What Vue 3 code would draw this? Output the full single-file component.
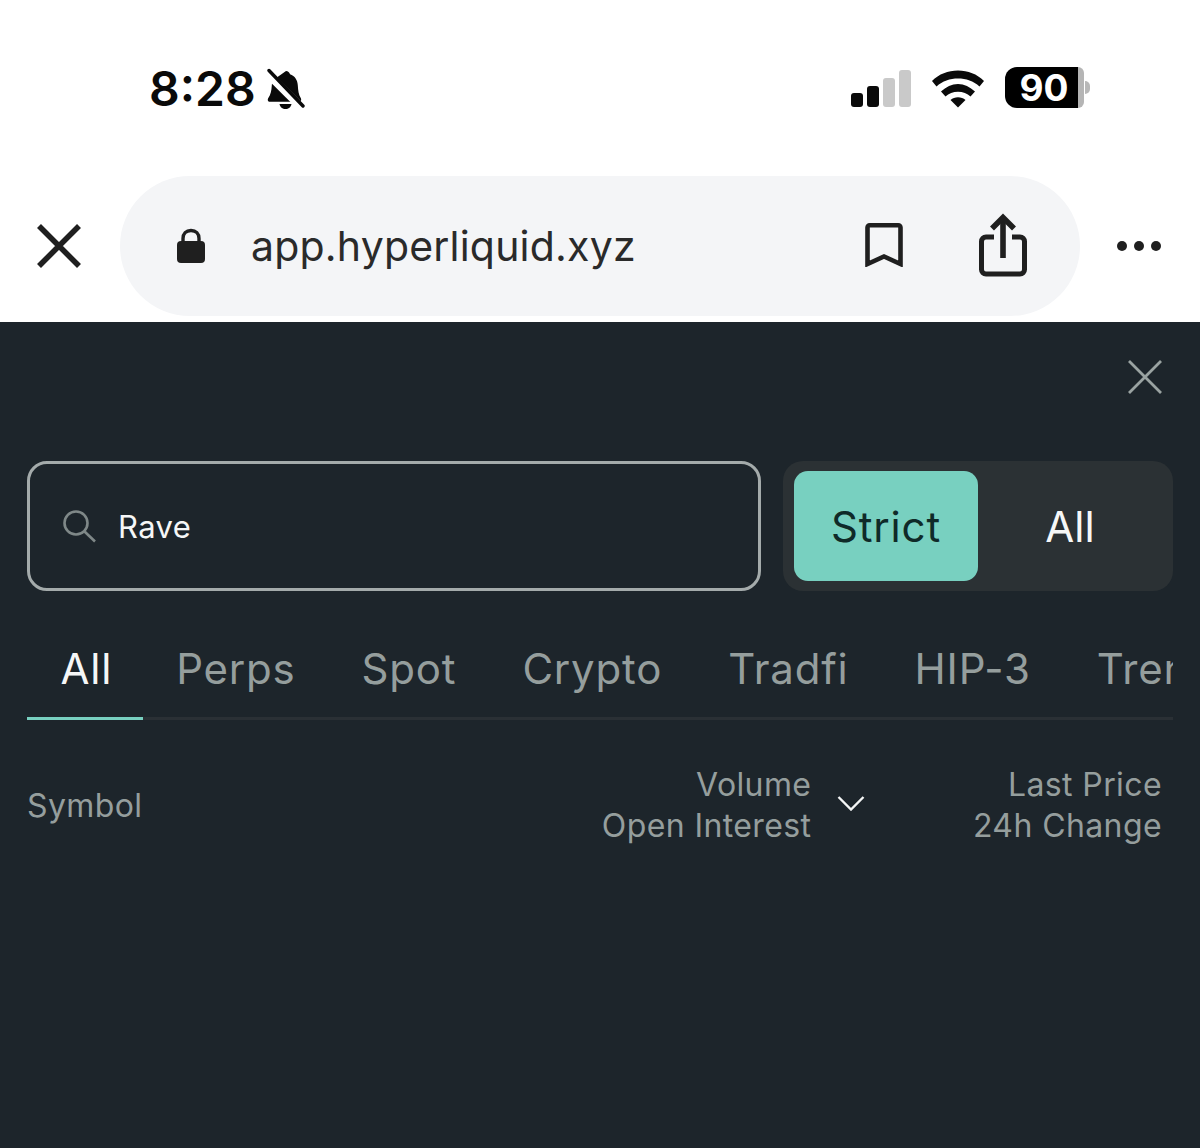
<template>
  <div class="page">
    <div class="browser">
      <div class="status-bar">
        <div class="status-left">
          <span class="time">8:28</span>
          <svg class="bell" width="40" height="42" viewBox="0 0 40 42">
            <path d="M19 3c2 0 3.500 1.300 4 3.200 5 1.600 7.500 5.800 7.800 11 .3 5 .8 9.500 2.800 12.500.9 1.500 1 4-1.400 4H3c-2.400 0-2.600-2.500-1.700-3.800 2.300-2.800 3.200-7.300 3.500-12.300.1-2 .6-4 1.500-5.500z" fill="#0a0a0a"/>
            <path d="M12.500 36h12c-.5 3-3 5-6 5s-5.500-2-6-5z" fill="#0a0a0a"/>
            <path d="M0 5l34 34" stroke="#fff" stroke-width="8"/>
            <path d="M2 2.500l34 35.500" stroke="#0a0a0a" stroke-width="3.400" stroke-linecap="round"/>
          </svg>
        </div>
        <div class="status-right">
          <div class="signal">
            <span class="bar b1"></span>
            <span class="bar b2"></span>
            <span class="bar b3"></span>
            <span class="bar b4"></span>
          </div>
          <svg class="wifi" width="54" height="40" viewBox="0 0 54 40">
            <path d="M1 13C8 6 17 2.500 27 2.500S46 6 53 13l-4.500 5.500C42.500 13 35 10.500 27 10.500S11.500 13 5.500 18.500z" fill="#0a0a0a"/>
            <path d="M10 23.500C15 19 20.800 16 27 16s12 3 17 7.500L39.500 28.500c-3.200-3-7.700-4.700-12.500-4.700s-9.300 1.700-12.500 4.700z" fill="#0a0a0a"/>
            <path d="M19.500 32c2-1.800 4.700-2.800 7.500-2.800s5.500 1 7.500 2.800L27 39.500z" fill="#0a0a0a"/>
          </svg>
          <div class="battery">
            <div class="battery-body">
              <span class="battery-text">90</span>
              <span class="battery-rest"></span>
            </div>
            <span class="battery-cap"></span>
          </div>
        </div>
      </div>
      <div class="url-row">
        <svg class="url-close" width="44" height="44" viewBox="0 0 44 44">
          <path d="M2 2l40 40M42 2L2 42" stroke="#1f1f1f" stroke-width="5.600"/>
        </svg>
        <div class="url-pill">
          <svg class="lock" width="28" height="36" viewBox="0 0 28 36">
            <path d="M6 15V10.500C6 5.500 9 2.500 14 2.500s8 3 8 8V15" fill="none" stroke="#1f1f1f" stroke-width="3.400"/>
            <rect x="0" y="13" width="28" height="22" rx="4" fill="#1f1f1f"/>
          </svg>
          <span class="url-text">app.hyperliquid.xyz</span>
          <svg class="bookmark" width="38" height="44" viewBox="0 0 38 44">
            <path d="M2.500 41V4.500c0-1.200 1-2.200 2.200-2.200h28.600c1.200 0 2.200 1 2.200 2.200V41L19 33.500z" fill="none" stroke="#1f1f1f" stroke-width="4.600"/>
          </svg>
          <svg class="share" width="48" height="64" viewBox="0 0 48 64">
            <path d="M15 24H7c-2.500 0-4.500 2-4.500 4.500v28c0 2.500 2 4.500 4.500 4.500h34c2.500 0 4.500-2 4.500-4.500v-28c0-2.500-2-4.500-4.500-4.500h-8" fill="none" stroke="#1f1f1f" stroke-width="5"/>
            <path d="M24 45V5" stroke="#1f1f1f" stroke-width="5.600"/>
            <path d="M13 15.500L24 4.500 35 15.500" fill="none" stroke="#1f1f1f" stroke-width="5.600"/>
          </svg>
        </div>
        <div class="more">
          <span class="dot"></span>
          <span class="dot"></span>
          <span class="dot"></span>
        </div>
      </div>
    </div>

    <div class="modal">
      <div class="modal-top">
        <svg width="34" height="34" viewBox="0 0 34 34">
          <path d="M1 1l32 32M33 1L1 33" stroke="#9aa3a2" stroke-width="2.800"/>
        </svg>
      </div>
      <div class="filter-row">
        <div class="search-box">
          <svg width="34" height="34" viewBox="0 0 34 34">
            <circle cx="14" cy="14" r="11.500" fill="none" stroke="#7f8888" stroke-width="2.600"/>
            <path d="M22.500 22.500L33 32.500" stroke="#7f8888" stroke-width="2.600"/>
          </svg>
          <span class="search-text">Rave</span>
        </div>
        <div class="mode-toggle">
          <div class="mode active">Strict</div>
          <div class="mode">All</div>
        </div>
      </div>
      <div class="tabs">
        <div v-for="(tab, i) in tabs" :key="tab" class="tab" :class="{ selected: i === 0 }">{{ tab }}</div>
      </div>
      <div class="table-head">
        <div class="col-symbol">Symbol</div>
        <div class="col-volume">
          <div>Volume</div>
          <div>Open Interest</div>
        </div>
        <svg class="chevron" width="28" height="16" viewBox="0 0 28 16">
          <path d="M1.500 2L14 14.500 26.500 2" fill="none" stroke="#f4f6f6" stroke-width="2.400"/>
        </svg>
        <div class="col-price">
          <div>Last Price</div>
          <div>24h Change</div>
        </div>
      </div>
    </div>
  </div>
</template>

<script setup>
const tabs = ['All', 'Perps', 'Spot', 'Crypto', 'Tradfi', 'HIP-3', 'Trending'];
</script>

<style scoped>
.page {
  width: 1200px;
  height: 1148px;
  display: flex;
  flex-direction: column;
  overflow: hidden;
  font-family: Inter, "Liberation Sans", sans-serif;
  background: #fff;
}

.browser {
  height: 322px;
  flex-shrink: 0;
  display: flex;
  flex-direction: column;
  background: #fff;
}

.status-bar {
  height: 176px;
  flex-shrink: 0;
  display: flex;
  justify-content: space-between;
  align-items: flex-start;
  padding: 60px 110px 0 149px;
  box-sizing: border-box;
}

.status-left {
  display: flex;
  align-items: center;
  gap: 11px;
  height: 58px;
}

.time {
  font-size: 48px;
  font-weight: 600;
  color: #0a0a0a;
  line-height: 58px;
}

.status-right {
  display: flex;
  align-items: center;
  height: 58px;
}

.signal {
  display: flex;
  align-items: flex-end;
  gap: 4px;
  height: 37px;
  margin-right: 20px;
  margin-top: -1px;
}

.bar {
  width: 12px;
  border-radius: 3px;
  background: #0a0a0a;
}

.b1 { height: 14px; }
.b2 { height: 21px; }
.b3 { height: 29px; background: #c9c9c9; }
.b4 { height: 37px; background: #c9c9c9; }

.wifi {
  margin-right: 20px;
  margin-top: -3px;
}

.battery {
  display: flex;
  align-items: center;
  gap: 1px;
  margin-top: -3px;
}

.battery-body {
  width: 79px;
  height: 41px;
  display: flex;
}

.battery-text {
  flex: 1;
  padding-left: 5px;
  text-align: center;
  color: #fff;
  background: #000;
  border-radius: 12px 0 0 12px;
  font-size: 37px;
  font-weight: 700;
  line-height: 41px;
}

.battery-rest {
  width: 6px;
  background: #b5b5b5;
  border-radius: 0 12px 12px 0;
}

.battery-cap {
  width: 5px;
  height: 13px;
  border-radius: 0 5px 5px 0;
  background: #b8b8b8;
}

.url-row {
  display: flex;
  align-items: flex-start;
  padding: 0 37px;
}

.url-close {
  margin-top: 48px;
  margin-right: 39px;
  flex-shrink: 0;
}

.url-pill {
  width: 960px;
  height: 140px;
  flex-shrink: 0;
  border-radius: 70px;
  background: #f4f5f7;
  display: flex;
  align-items: center;
  padding-left: 57px;
  box-sizing: border-box;
}

.lock {
  margin-top: -1px;
}

.url-text {
  margin-left: 46px;
  width: 614px;
  font-size: 41px;
  letter-spacing: 0.2px;
  color: #2a2a2a;
  white-space: nowrap;
}

.bookmark {
  margin-top: -3px;
}

.share {
  margin-left: 76px;
  margin-top: -3px;
}

.more {
  display: flex;
  gap: 7px;
  margin-left: 37px;
  margin-top: 65px;
}

.dot {
  width: 10px;
  height: 10px;
  border-radius: 50%;
  background: #1f1f1f;
}

.modal {
  flex: 1;
  background: #1d252b;
  padding: 38px 27px 0;
  display: flex;
  flex-direction: column;
}

.modal-top {
  display: flex;
  justify-content: flex-end;
  padding-right: 11px;
  height: 34px;
}

.filter-row {
  display: flex;
  gap: 22px;
  margin-top: 67px;
  height: 130px;
}

.search-box {
  width: 734px;
  height: 130px;
  box-sizing: border-box;
  border: 3px solid #a4abab;
  border-radius: 20px;
  display: flex;
  align-items: center;
  padding-left: 32px;
}

.search-text {
  margin-left: 22px;
  font-size: 31px;
  letter-spacing: 0.4px;
  color: #f6f7f7;
}

.mode-toggle {
  width: 390px;
  height: 130px;
  box-sizing: border-box;
  background: #2b3134;
  border-radius: 20px;
  padding: 10px 11px;
  display: flex;
}

.mode {
  flex: 1;
  display: flex;
  align-items: center;
  justify-content: center;
  font-size: 42px;
  color: #f6f7f7;
  border-radius: 14px;
}

.mode.active {
  flex: none;
  width: 184px;
  background: #78d0c0;
  color: #0f2a28;
  letter-spacing: 0.8px;
}

.tabs {
  display: flex;
  margin-top: 38px;
  height: 91px;
  width: 1146px;
  overflow: hidden;
  box-shadow: inset 0 -3px 0 #2a3035;
}

.tab {
  flex-shrink: 0;
  height: 91px;
  box-sizing: border-box;
  padding: 0 32.500px 0 33.500px;
  font-size: 42px;
  letter-spacing: 0.8px;
  line-height: 80px;
  color: #959e9d;
  white-space: nowrap;
}

.tab.selected {
  color: #f6f7f7;
  padding-right: 30.400px;
  border-bottom: 3px solid #78d0c0;
}

.table-head {
  display: flex;
  align-items: center;
  margin-top: 44px;
  padding-right: 11px;
  font-size: 32px;
  letter-spacing: 0.4px;
  line-height: 41px;
  color: #959e9d;
}

.col-symbol {
  flex: 1;
}

.col-volume {
  text-align: right;
}

.chevron {
  margin-left: 26px;
  margin-right: 107.500px;
  margin-top: -4px;
  flex-shrink: 0;
}

.col-price {
  text-align: right;
}
</style>
